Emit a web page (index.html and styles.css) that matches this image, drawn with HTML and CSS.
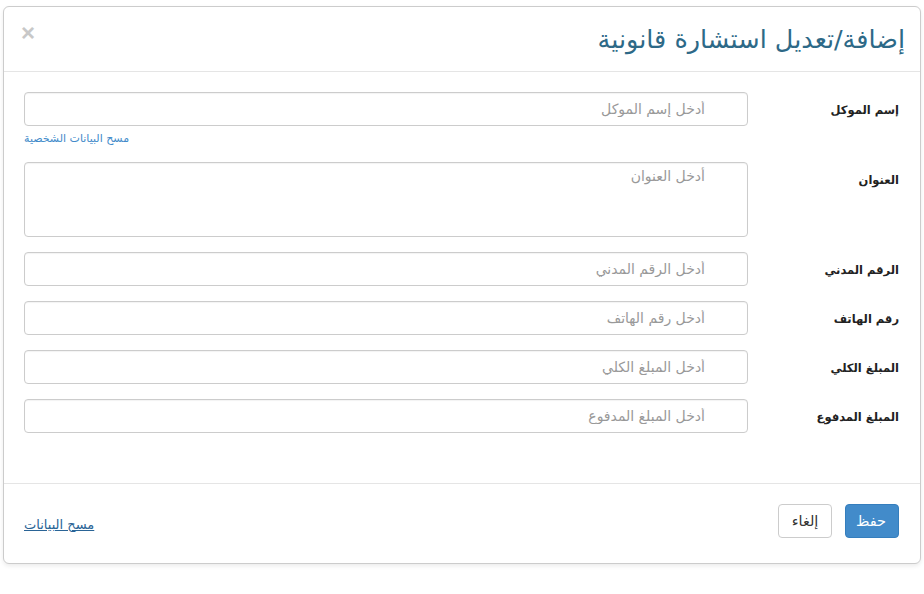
FILE: index.html
```html
<!DOCTYPE html>
<html lang="ar" dir="rtl">
<head>
  <meta charset="UTF-8" />
  <meta name="viewport" content="width=device-width, initial-scale=1.0"/>
  <title>إضافة/تعديل استشارة قانونية</title>
  <link rel="stylesheet" href="styles.css">
</head>
<body>
  <div class="modal">
    <!-- Header -->
    <div class="modal-header">
      <h4 class="modal-title">إضافة/تعديل استشارة قانونية</h4>
      <button type="button" class="close">&times;</button>
    </div>

    <!-- Form -->
    <form class="modal-body">
      <div class="form-group">
        <label for="clientName">إسم الموكل</label>
        <div class="field">
          <input type="text" id="clientName" placeholder="أدخل إسم الموكل" />
          <a href="#" class="help-link">مسح البيانات الشخصية</a>
        </div>
      </div>

      <div class="form-group">
        <label for="address">العنوان</label>
        <div class="field">
          <textarea id="address" placeholder="أدخل العنوان"></textarea>
        </div>
      </div>

      <div class="form-group">
        <label for="civilId">الرقم المدني</label>
        <div class="field">
          <input type="text" id="civilId" placeholder="أدخل الرقم المدني" />
        </div>
      </div>

      <div class="form-group">
        <label for="phone">رقم الهاتف</label>
        <div class="field">
          <input type="text" id="phone" placeholder="أدخل رقم الهاتف" />
        </div>
      </div>

      <div class="form-group">
        <label for="total">المبلغ الكلي</label>
        <div class="field">
          <input type="text" id="total" placeholder="أدخل المبلغ الكلي" />
        </div>
      </div>

      <div class="form-group">
        <label for="paid">المبلغ المدفوع</label>
        <div class="field">
          <input type="text" id="paid" placeholder="أدخل المبلغ المدفوع" />
        </div>
      </div>
    </form>

    <!-- Footer -->
    <div class="modal-footer">
      <button type="button" class="btn btn-primary">حفظ</button>
      <button type="button" class="btn btn-default">إلغاء</button>
      <a href="#" class="clear-link">مسح البيانات</a>
    </div>
  </div>
</body>
</html>
```
FILE: styles.css
```css
:root {
  --border: #cccccc;
  --divider: #e5e5e5;
  --title: #2d6987;
  --primary: #428bca;
  --primary-border: #357ebd;
  --link: #428bca;
  --link-dark: #2a6496;
  --text: #333333;
  --placeholder: #999999;
}

* {
  box-sizing: border-box;
  margin: 0;
}

body {
  font-family: "DejaVu Sans", "Liberation Sans", sans-serif;
  font-size: 14px;
  color: var(--text);
  background: #ffffff;
  padding: 6px 3px;
}

.modal {
  width: 918px;
  background: #ffffff;
  border: 1px solid var(--border);
  border-radius: 6px;
  box-shadow: 0 2px 4px rgba(0, 0, 0, 0.08);
}

.modal-header {
  display: flex;
  justify-content: space-between;
  align-items: flex-start;
  height: 65px;
  padding: 14px 15px 0 17px;
  border-bottom: 1px solid var(--divider);
}

.modal-title {
  font-size: 25.5px;
  font-weight: 400;
  line-height: 36px;
  color: var(--title);
}

.close {
  background: none;
  border: none;
  padding: 0;
  margin-top: 2px;
  font-family: "Liberation Sans", sans-serif;
  font-size: 24px;
  line-height: 20px;
  font-weight: 700;
  color: #c8c8c8;
  cursor: pointer;
}

.modal-body {
  display: flex;
  flex-direction: column;
  gap: 15px;
  padding: 20px 21px 50px 20px;
}

.form-group {
  display: flex;
  align-items: flex-start;
  justify-content: space-between;
}

.form-group label {
  height: 34px;
  font-size: 11.5px;
  font-weight: 700;
  color: #222222;
  line-height: 36px;
}

.field {
  width: 724px;
}

input, textarea {
  display: block;
  width: 100%;
  height: 34px;
  padding: 6px 42px 6px 12px;
  font-family: inherit;
  font-size: 14px;
  color: var(--text);
  background: #ffffff;
  border: 1px solid var(--border);
  border-radius: 4px;
  box-shadow: inset 0 1px 1px rgba(0, 0, 0, 0.05);
}

textarea {
  height: 75px;
  resize: none;
  padding-top: 5px;
}

::placeholder {
  color: var(--placeholder);
}

.help-link {
  display: block;
  margin-top: 4px;
  font-size: 11px;
  line-height: 17px;
  text-align: left;
  color: var(--link);
  text-decoration: none;
}

.modal-footer {
  display: flex;
  align-items: center;
  gap: 13px;
  height: 80px;
  padding: 0 21px 5px 20px;
  border-top: 1px solid var(--divider);
}

.btn {
  height: 34px;
  padding: 0 12px;
  font-family: inherit;
  font-size: 14.5px;
  border-radius: 4px;
  cursor: pointer;
}

.btn-primary {
  width: 54px;
  background: var(--primary);
  border: 1px solid var(--primary-border);
  color: #ffffff;
}

.btn-default {
  width: 54px;
  background: #ffffff;
  border: 1px solid var(--border);
  color: var(--text);
}

.clear-link {
  margin-right: auto;
  margin-top: 6px;
  font-size: 13px;
  color: var(--link-dark);
}
```
